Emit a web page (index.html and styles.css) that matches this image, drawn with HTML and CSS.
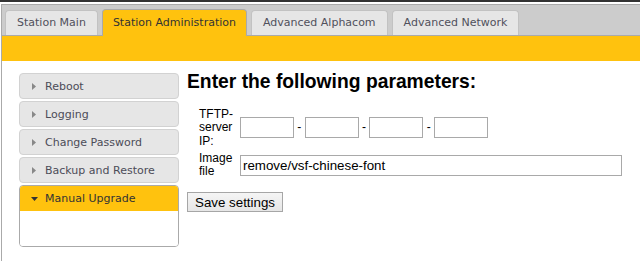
FILE: index.html
```html
<!DOCTYPE html>
<html>
<head>
<meta charset="utf-8">
<link rel="stylesheet" href="styles.css">
</head>
<body>
<div class="topline"></div>
<div class="page">
  <div class="tabbar">
    <div class="tab">Station Main</div>
    <div class="tab active">Station Administration</div>
    <div class="tab">Advanced Alphacom</div>
    <div class="tab">Advanced Network</div>
  </div>
  <div class="band"></div>
  <div class="content">
    <nav class="sidebar">
      <div class="item"><svg class="arr" width="4" height="7" viewBox="0 0 4 7"><polygon points="0,0 4,3.5 0,7"/></svg><span>Reboot</span></div>
      <div class="item"><svg class="arr" width="4" height="7" viewBox="0 0 4 7"><polygon points="0,0 4,3.5 0,7"/></svg><span>Logging</span></div>
      <div class="item"><svg class="arr" width="4" height="7" viewBox="0 0 4 7"><polygon points="0,0 4,3.5 0,7"/></svg><span>Change Password</span></div>
      <div class="item"><svg class="arr" width="4" height="7" viewBox="0 0 4 7"><polygon points="0,0 4,3.5 0,7"/></svg><span>Backup and Restore</span></div>
      <div class="panel">
        <div class="panel-head"><svg class="arr-down" width="7" height="4" viewBox="0 0 7 4"><polygon points="0,0 7,0 3.5,4"/></svg><span>Manual Upgrade</span></div>
        <div class="panel-body"></div>
      </div>
    </nav>
    <main class="main">
      <h1>Enter the following parameters:</h1>
      <table class="form">
        <tr>
          <td class="lbl">TFTP-server IP:</td>
          <td class="fields"><input class="ip" type="text"> - <input class="ip" type="text"> - <input class="ip" type="text"> - <input class="ip" type="text"></td>
        </tr>
        <tr>
          <td class="lbl">Image file</td>
          <td class="fields"><input class="file" type="text" value="remove/vsf-chinese-font"></td>
        </tr>
      </table>
      <button class="save" type="button">Save settings</button>
    </main>
  </div>
</div>
</body>
</html>
```
FILE: styles.css
```css
html, body {
  margin: 0;
  background: #fff;
}
body {
  font-family: "DejaVu Sans", sans-serif;
  overflow: hidden;
}
.topline {
  height: 2px;
  background: #333;
  margin-bottom: 2px;
}
.page {
  margin-left: 1px;
  border-left: 1px solid #aaa;
  height: 257px;
}
.tabbar {
  height: 30px;
  background: #ccc;
  border-top: 1px solid #aaa;
  border-bottom: 1px solid #aaa;
  display: flex;
  align-items: flex-end;
  gap: 4px;
  padding-left: 3px;
}
.tab {
  box-sizing: border-box;
  height: 25px;
  padding: 0 11px;
  border: 1px solid #c2c2c2;
  border-bottom: 0;
  border-radius: 4px 4px 0 0;
  background: #e6e6e6;
  color: #50505c;
  font-size: 11px;
  line-height: 24px;
  white-space: nowrap;
}
.tab.active {
  height: 27px;
  margin-bottom: -1px;
  padding: 0 10px;
  background: #ffc20e;
  border-color: #aaa;
  color: #333;
  line-height: 26px;
}
.band {
  height: 25px;
  background: #ffc20e;
}
.content {
  display: flex;
  align-items: flex-start;
  padding: 9px 0 0 17px;
}
.sidebar {
  width: 160px;
  margin-top: 3px;
  display: flex;
  flex-direction: column;
  gap: 2px;
  font-size: 11px;
}
.item {
  box-sizing: border-box;
  height: 26px;
  border: 1px solid #d2d2d2;
  border-radius: 4px;
  background: #e6e6e6;
  display: flex;
  align-items: center;
  padding-left: 12px;
  gap: 9px;
  color: #4c4c58;
}
.arr polygon { fill: #888; }
.arr-down polygon { fill: #333; }
.panel {
  border: 1px solid #aaa;
  border-radius: 4px;
  overflow: hidden;
}
.panel-head {
  height: 25px;
  background: #ffc20e;
  display: flex;
  align-items: center;
  padding-left: 11px;
  gap: 7px;
  color: #333;
}
.panel-body {
  height: 35px;
  background: #fff;
}
.main {
  margin-left: 8px;
  font-family: "Liberation Sans", Arial, sans-serif;
  color: #000;
}
.main h1 {
  margin: 0;
  font-size: 19.3px;
  line-height: 23px;
  font-weight: bold;
}
.form {
  border-spacing: 2px;
  margin: 12px 0 0 9px;
}
.form td {
  padding: 1px;
  font-size: 12px;
  vertical-align: middle;
}
.form .lbl {
  width: 37px;
  line-height: 13.3px;
}
.form .fields {
  white-space: nowrap;
}
.ip, .file {
  box-sizing: border-box;
  height: 21px;
  margin: 0;
  padding: 1px 2px;
  border: 1px solid #a9a9a9;
  border-radius: 0;
  font: 13.33px "Liberation Sans", Arial, sans-serif;
  color: #000;
  background: #fff;
  vertical-align: middle;
  outline: none;
}
.ip { width: 54px; }
.file { width: 382px; }
.save {
  display: block;
  height: 20px;
  margin: 11px 0 0 0;
  padding: 0 7px;
  border: 1px solid #a6a6a6;
  border-radius: 0;
  background: linear-gradient(#f5f5f5, #e6e6e6);
  font: 13.33px "Liberation Sans", Arial, sans-serif;
  color: #000;
}
```
